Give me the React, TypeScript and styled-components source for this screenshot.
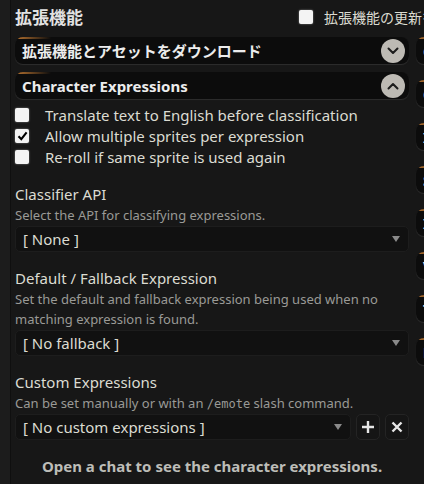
import styled, { createGlobalStyle } from 'styled-components';

const GlobalStyle = createGlobalStyle`
  html, body {
    margin: 0;
    padding: 0;
    background: #1c1c1c;
    overflow: hidden;
  }
  body {
    font-family: "Noto Sans", "Noto Sans CJK JP", sans-serif;
    color: #dcdcd2;
  }
`;

const sideTitles = ['C', 'C', 'I', 'S', 'I', 'V', 'T', 'R'];

export default function App() {
    return (
        <>
            <GlobalStyle />
            <Page>
                <Panel>
                    <TopBar>
                        <Title>拡張機能</Title>
                        <UpdateToggle>
                            <CheckBox />
                            <span>拡張機能の更新を通知</span>
                        </UpdateToggle>
                    </TopBar>
                    <Columns>
                        <MainColumn>
                            <DrawerHeader>
                                <DrawerTitle>拡張機能とアセットをダウンロード</DrawerTitle>
                                <ToggleCircle>
                                    <Chevron up={false} />
                                </ToggleCircle>
                            </DrawerHeader>
                            <DrawerHeader>
                                <DrawerTitle>Character Expressions</DrawerTitle>
                                <ToggleCircle>
                                    <Chevron up />
                                </ToggleCircle>
                            </DrawerHeader>
                            <Options>
                                <CheckRow>
                                    <CheckBox />
                                    <span>Translate text to English before classification</span>
                                </CheckRow>
                                <CheckRow>
                                    <CheckBox>
                                        <CheckMark />
                                    </CheckBox>
                                    <span>Allow multiple sprites per expression</span>
                                </CheckRow>
                                <CheckRow>
                                    <CheckBox />
                                    <span>Re-roll if same sprite is used again</span>
                                </CheckRow>
                            </Options>

                            <Section>
                                <SectionTitle>Classifier API</SectionTitle>
                                <Hint>Select the API for classifying expressions.</Hint>
                                <Select>
                                    <span>[ None ]</span>
                                    <Arrow />
                                </Select>
                            </Section>

                            <Section>
                                <SectionTitle>Default / Fallback Expression</SectionTitle>
                                <Hint>Set the default and fallback expression being used when no matching expression is found.</Hint>
                                <Select>
                                    <span>[ No fallback ]</span>
                                    <Arrow />
                                </Select>
                            </Section>

                            <Section>
                                <SectionTitle>Custom Expressions</SectionTitle>
                                <Hint>Can be set manually or with an <Code>/emote</Code> slash command.</Hint>
                                <SelectRow>
                                    <Select>
                                        <span>[ No custom expressions ]</span>
                                        <Arrow />
                                    </Select>
                                    <IconButton aria-label="add">
                                        <svg width="14" height="14" viewBox="0 0 14 14">
                                            <path d="M7 1v12M1 7h12" stroke="#e6e6e6" strokeWidth="2.4" />
                                        </svg>
                                    </IconButton>
                                    <IconButton aria-label="remove">
                                        <svg width="12" height="12" viewBox="0 0 12 12">
                                            <path d="M1.5 1.5l9 9M10.5 1.5l-9 9" stroke="#e6e6e6" strokeWidth="2.4" />
                                        </svg>
                                    </IconButton>
                                </SelectRow>
                            </Section>

                            <EmptyNote>Open a chat to see the character expressions.</EmptyNote>
                        </MainColumn>
                        <SideColumn>
                            {sideTitles.map((t, i) => (
                                <DrawerHeader key={i}>
                                    <DrawerTitle>{t}</DrawerTitle>
                                </DrawerHeader>
                            ))}
                        </SideColumn>
                    </Columns>
                </Panel>
            </Page>
        </>
    );
}

function Chevron({ up }: { up: boolean }) {
    return (
        <svg width="12" height="8" viewBox="0 0 12 8">
            <path
                d={up ? 'M1.5 6.5L6 2l4.5 4.5' : 'M1.5 1.5L6 6l4.5-4.5'}
                fill="none"
                stroke="#1c1c1c"
                strokeWidth="2"
                strokeLinecap="round"
                strokeLinejoin="round"
            />
        </svg>
    );
}

function CheckMark() {
    return (
        <svg width="11" height="10" viewBox="0 0 11 10">
            <path d="M1.5 5.2l2.8 3L9.6 1.4" fill="none" stroke="#000" strokeWidth="2.1" />
        </svg>
    );
}

const Page = styled.div`
  width: 424px;
  height: 484px;
  padding-left: 10px;
  box-sizing: border-box;
  overflow: hidden;
`;

const Panel = styled.div`
  height: 100%;
  background: #171717;
  border-left: 1px solid #0f0f0f;
  padding: 0 0 0 4px;
  box-sizing: border-box;
`;

const TopBar = styled.div`
  display: flex;
  align-items: center;
  justify-content: space-between;
  height: 33px;
  white-space: nowrap;
`;

const Title = styled.h2`
  margin: 0;
  font-size: 17px;
  font-weight: 700;
  color: #e2e2e2;
`;

const UpdateToggle = styled.label`
  display: flex;
  align-items: center;
  flex-shrink: 0;
  gap: 11px;
  font-size: 14px;
  color: #dcdcd2;
  margin-right: -40px;
`;

const Columns = styled.div`
  display: flex;
  gap: 7px;
  margin-top: 4px;
`;

const MainColumn = styled.div`
  width: 394px;
  flex-shrink: 0;
  display: flex;
  flex-direction: column;
`;

const SideColumn = styled.div`
  width: 200px;
  flex-shrink: 0;
  display: flex;
  flex-direction: column;
  gap: 8px;
`;

const DrawerHeader = styled.div`
  height: 27px;
  flex-shrink: 0;
  box-sizing: border-box;
  display: flex;
  align-items: center;
  justify-content: space-between;
  padding: 0 4px 0 7px;
  border-radius: 8px;
  background:
    linear-gradient(90deg, rgba(196, 122, 50, 0.95), rgba(196, 122, 50, 0) 36px) top left / 100% 2px no-repeat,
    #0c0c0c;
  box-shadow: 0 1px 1px rgba(70, 70, 70, 0.5);
  & + & {
    margin-top: 8px;
  }
`;

const DrawerTitle = styled.span`
  font-size: 15px;
  font-weight: 700;
  color: #ececec;
  white-space: nowrap;
`;

const ToggleCircle = styled.span`
  width: 24px;
  height: 24px;
  border-radius: 50%;
  background: #bdbab4;
  display: flex;
  align-items: center;
  justify-content: center;
`;

const Options = styled.div`
  display: flex;
  flex-direction: column;
  padding: 5px 0 1px;
`;

const CheckRow = styled.label`
  display: flex;
  align-items: center;
  gap: 16px;
  height: 21px;
  font-size: 15px;
  white-space: nowrap;
`;

const CheckBox = styled.span`
  width: 14px;
  height: 14px;
  flex-shrink: 0;
  border-radius: 2px;
  background: #f4f4f4;
  box-shadow: 0 0 2px rgba(255, 255, 255, 0.5);
  display: flex;
  align-items: center;
  justify-content: center;
`;

const Section = styled.div`
  display: flex;
  flex-direction: column;
  margin-top: 16px;
`;

const SectionTitle = styled.div`
  font-size: 15px;
  line-height: 21px;
`;

const Hint = styled.div`
  font-size: 13px;
  line-height: 20.5px;
  color: #9a9a96;
`;

const Code = styled.code`
  font-family: "DejaVu Sans Mono", monospace;
  font-size: 12px;
`;

const Select = styled.div`
  flex: 1 1 auto;
  min-width: 0;
  height: 26px;
  box-sizing: border-box;
  display: flex;
  align-items: center;
  justify-content: space-between;
  padding: 0 8px 0 7px;
  background: #111111;
  border: 1px solid #1d1d1d;
  border-radius: 5px;
  font-size: 15px;
`;

const Arrow = styled.span`
  width: 0;
  height: 0;
  border-left: 4px solid transparent;
  border-right: 4px solid transparent;
  border-top: 6px solid #8a8a8a;
`;

const SelectRow = styled.div`
  display: flex;
  align-items: center;
  gap: 5px;
`;

const IconButton = styled.button`
  width: 24px;
  height: 26px;
  padding: 0;
  display: flex;
  align-items: center;
  justify-content: center;
  background: #151515;
  border: 1px solid #242424;
  border-radius: 5px;
`;

const EmptyNote = styled.div`
  margin-top: 16px;
  line-height: 21px;
  text-align: center;
  font-size: 15px;
  font-weight: 700;
  color: #bdbdb8;
`;
